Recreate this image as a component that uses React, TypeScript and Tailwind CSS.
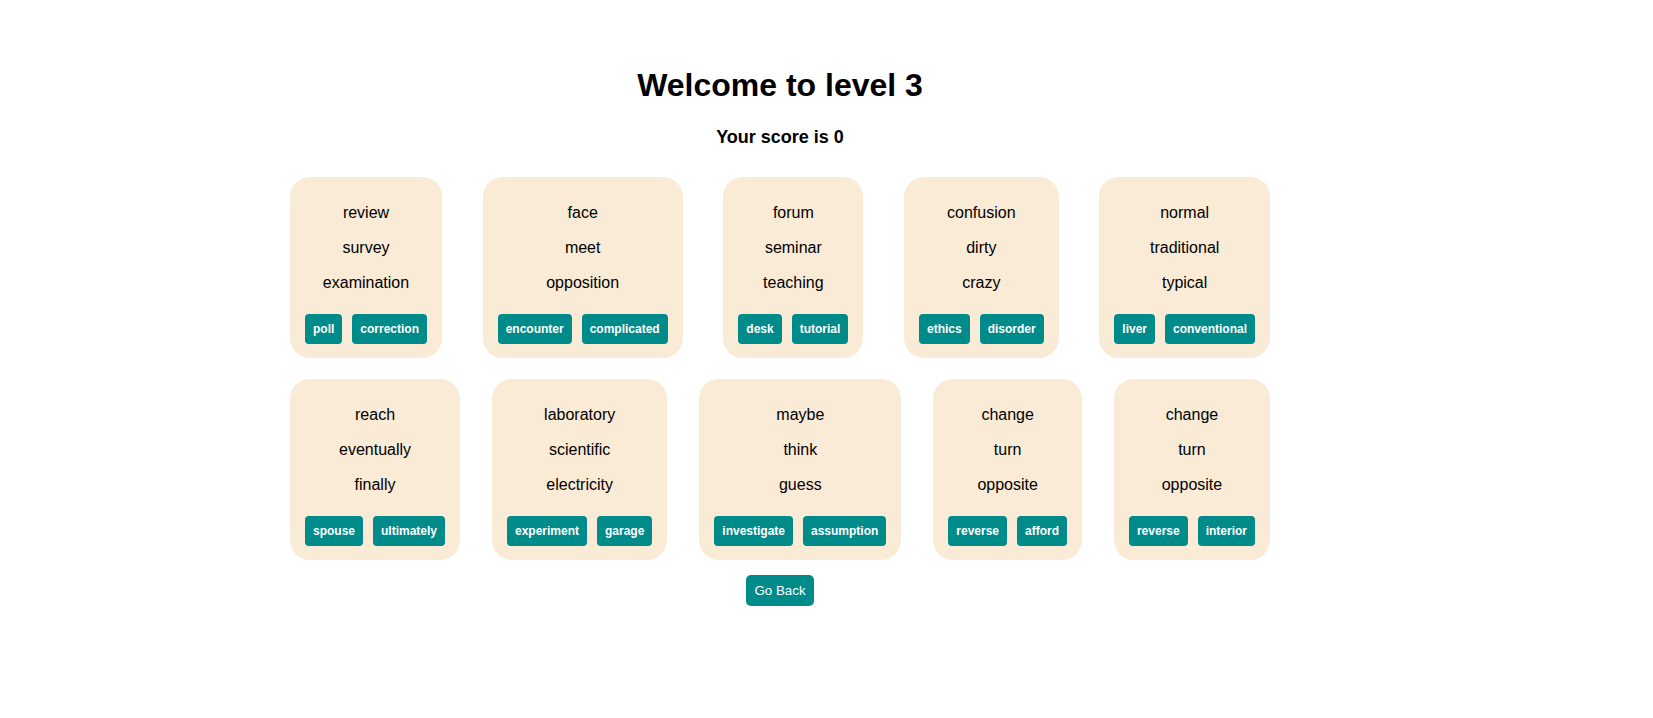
import React from 'react'

type Card = {
  words: string[]
  options: string[]
}

const rows: Card[][] = [
  [
    { words: ['review', 'survey', 'examination'], options: ['poll', 'correction'] },
    { words: ['face', 'meet', 'opposition'], options: ['encounter', 'complicated'] },
    { words: ['forum', 'seminar', 'teaching'], options: ['desk', 'tutorial'] },
    { words: ['confusion', 'dirty', 'crazy'], options: ['ethics', 'disorder'] },
    { words: ['normal', 'traditional', 'typical'], options: ['liver', 'conventional'] },
  ],
  [
    { words: ['reach', 'eventually', 'finally'], options: ['spouse', 'ultimately'] },
    { words: ['laboratory', 'scientific', 'electricity'], options: ['experiment', 'garage'] },
    { words: ['maybe', 'think', 'guess'], options: ['investigate', 'assumption'] },
    { words: ['change', 'turn', 'opposite'], options: ['reverse', 'afford'] },
    { words: ['change', 'turn', 'opposite'], options: ['reverse', 'interior'] },
  ],
]

function WordCard({ card }: { card: Card }) {
  return (
    <div className="bg-[#faebd7] rounded-[20px] px-[15px] pt-[10px] pb-[14px] flex flex-col items-center">
      {card.words.map((w) => (
        <p key={w} className="mt-4 text-[16px] leading-[19px] text-black">
          {w}
        </p>
      ))}
      <div className="mt-[22px] flex gap-[10px]">
        {card.options.map((o) => (
          <button
            key={o}
            className="bg-[#008b8b] text-white font-bold text-[12px] leading-[14px] px-2 py-2 rounded-[4px]"
          >
            {o}
          </button>
        ))}
      </div>
    </div>
  )
}

export default function App() {
  return (
    <div className="w-[1560px] min-h-[718px] flex flex-col items-center pt-[67px] font-['Liberation_Sans',Arial,sans-serif] text-black bg-white">
      <h1 className="text-[32px] leading-[37px] font-bold">Welcome to level 3</h1>
      <h3 className="mt-[22px] text-[18px] leading-[22px] font-bold">Your score is 0</h3>

      <div className="mt-[29px] w-[980px] flex flex-col gap-[21px]">
        {rows.map((row, i) => (
          <div key={i} className="flex justify-between">
            {row.map((card, j) => (
              <WordCard key={j} card={card} />
            ))}
          </div>
        ))}
      </div>

      <button className="mt-[15px] bg-[#008b8b] text-white text-[13.33px] leading-[15px] px-[8.5px] py-2 rounded-[5px]">
        Go Back
      </button>
    </div>
  )
}
